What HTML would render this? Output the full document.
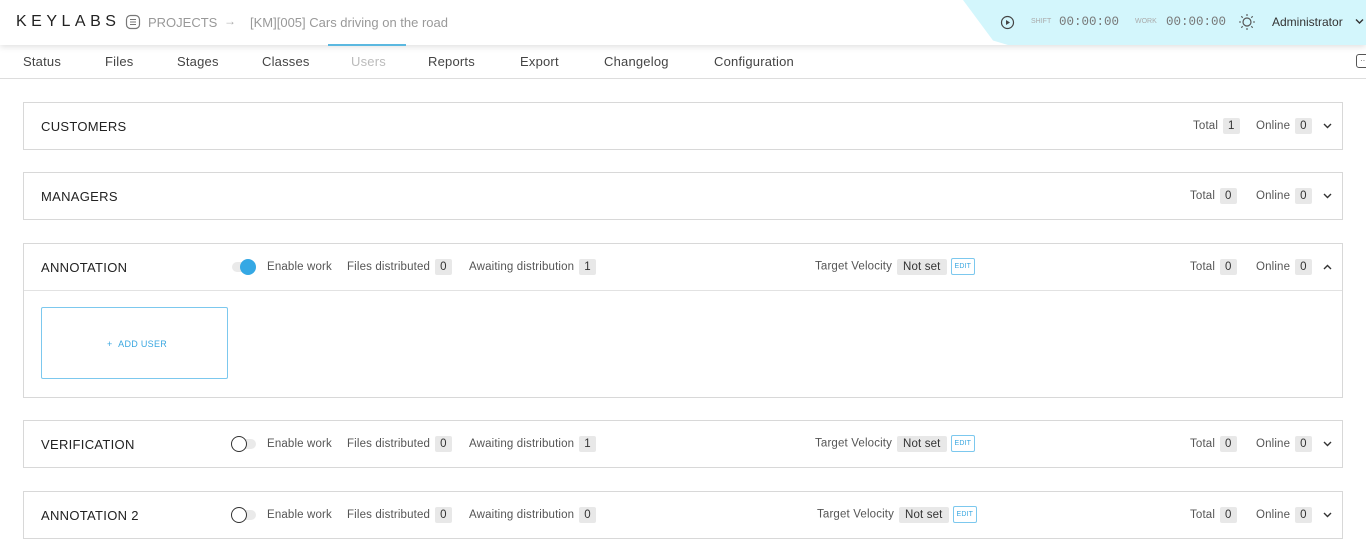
<!DOCTYPE html>
<html><head><style>
*{box-sizing:border-box;margin:0;padding:0}
body{width:1366px;height:541px;overflow:hidden;background:#fff;font-family:"Liberation Sans",sans-serif;color:#333;position:relative;font-size:12px}
.a{position:absolute;white-space:nowrap}
.hdr{position:absolute;left:0;top:0;width:1366px;height:45px;background:#fff;box-shadow:0 2px 6px rgba(0,0,0,.12);z-index:2}
.cy{position:absolute;left:963px;top:0;width:420px;height:45px;background:#d3f6fc;clip-path:polygon(0 0,100% 0,100% 100%,45px 100%,30px 90%)}
.tabs{position:absolute;top:45px;left:0;width:1366px;height:34px;border-bottom:1px solid #ddd}
.tab{position:absolute;top:54px;font-size:13px;color:#444;letter-spacing:.2px}
.panel{position:absolute;left:23px;width:1320px;border:1px solid #d8d8d8;background:#fff}
.t{font-size:13px;color:#222;letter-spacing:.3px}
.lb{font-size:11.5px;color:#555;letter-spacing:.15px}
.bd{display:inline-block;background:#e8e8e8;border-radius:2px;padding:2px 5px;font-size:11.5px;color:#333;margin-left:5px}
.edit{display:inline-block;border:1px solid #7cc8ee;border-radius:2px;font-size:7px;color:#3aa7e0;padding:4px 3px;margin-left:4px;vertical-align:middle}
.tog{position:absolute;width:24px;height:10px;border-radius:5px;background:#eaeaea}
.knob{position:absolute;top:-4px;width:16px;height:16px;border-radius:50%}
</style></head><body>
<div class="hdr">
<div class="cy"></div>
<div class="a" style="left:16px;top:13px;font-size:16px;letter-spacing:4.5px;color:#222">KEYLABS</div>
<svg class="a" style="left:125px;top:14px" width="16" height="16" viewBox="0 0 16 16"><rect x="1.5" y="1.5" width="13" height="13" rx="4" fill="none" stroke="#777" stroke-width="1.2"/><path d="M5 5.5h6M5 8h6M5 10.5h6" stroke="#777" stroke-width="1.1"/></svg>
<div class="a" style="left:148px;top:15px;font-size:13px;color:#999">PROJECTS</div>
<div class="a" style="left:224px;top:14px;font-size:12px;color:#aaa">→</div>
<div class="a" style="left:250px;top:15px;font-size:13px;color:#999">[KM][005] Cars driving on the road</div>
<svg class="a" style="left:1000px;top:15px" width="15" height="15" viewBox="0 0 15 15"><circle cx="7.5" cy="7.5" r="6" fill="none" stroke="#444" stroke-width="1.2"/><path d="M6 5v5l4-2.5z" fill="#444"/></svg>
<div class="a" style="left:1031px;top:18px;font-size:7px;color:#aaa">SHIFT</div>
<div class="a" style="left:1059px;top:15px;font-size:12.5px;color:#777;font-family:'Liberation Mono',monospace">00:00:00</div>
<div class="a" style="left:1135px;top:18px;font-size:7px;color:#aaa">WORK</div>
<div class="a" style="left:1166px;top:15px;font-size:12.5px;color:#777;font-family:'Liberation Mono',monospace">00:00:00</div>
<svg class="a" style="left:1238px;top:13px" width="18" height="18" viewBox="0 0 18 18"><circle cx="9" cy="9" r="4" fill="none" stroke="#555" stroke-width="1.2"/><path d="M9 1v2M9 15v2M1 9h2M15 9h2M3.3 3.3l1.4 1.4M13.3 13.3l1.4 1.4M3.3 14.7l1.4-1.4M13.3 4.7l1.4-1.4" stroke="#555" stroke-width="1.1"/></svg>
<div class="a" style="left:1272px;top:15px;font-size:12px;color:#333">Administrator</div>
<svg class="a" style="left:1355px;top:18px" width="9" height="7" viewBox="0 0 9 7"><path d="M1 1.5l3.5 3.5 3.5-3.5" fill="none" stroke="#333" stroke-width="1.4"/></svg>
</div>
<div class="tabs"></div>
<div class="a" style="left:328px;top:44px;width:78px;height:2px;background:#5bb8e0;z-index:3"></div>
<div class="tab" style="left:23px">Status</div>
<div class="tab" style="left:105px">Files</div>
<div class="tab" style="left:177px">Stages</div>
<div class="tab" style="left:262px">Classes</div>
<div class="tab" style="left:351px;color:#bbb">Users</div>
<div class="tab" style="left:428px">Reports</div>
<div class="tab" style="left:520px">Export</div>
<div class="tab" style="left:604px">Changelog</div>
<div class="tab" style="left:714px">Configuration</div>
<div class="a" style="left:1356px;top:54px;width:14px;height:14px;border:1.3px solid #555;border-radius:3px"></div>
<div class="a" style="left:1360px;top:56px;font-size:8px;color:#555">··</div>

<div class="panel" style="top:102px;height:48px"></div>
<div class="panel" style="top:172px;height:48px"></div>
<div class="panel" style="top:243px;height:155px"><div style="position:absolute;left:0;top:46px;width:100%;border-top:1px solid #e2e2e2"></div></div>
<div class="panel" style="top:420px;height:48px"></div>
<div class="panel" style="top:491px;height:48px"></div>

<div class="a t" style="left:41px;top:119px">CUSTOMERS</div>
<div class="a t" style="left:41px;top:189px">MANAGERS</div>
<div class="a t" style="left:41px;top:260px">ANNOTATION</div>
<div class="a t" style="left:41px;top:437px">VERIFICATION</div>
<div class="a t" style="left:41px;top:508px">ANNOTATION 2</div>

<div class="a lb" style="left:1193px;top:118px">Total<span class="bd">1</span></div>
<div class="a lb" style="left:1256px;top:118px">Online<span class="bd">0</span></div>
<div class="a lb" style="left:1190px;top:188px">Total<span class="bd">0</span></div>
<div class="a lb" style="left:1256px;top:188px">Online<span class="bd">0</span></div>
<div class="a lb" style="left:1190px;top:259px">Total<span class="bd">0</span></div>
<div class="a lb" style="left:1256px;top:259px">Online<span class="bd">0</span></div>
<div class="a lb" style="left:1190px;top:436px">Total<span class="bd">0</span></div>
<div class="a lb" style="left:1256px;top:436px">Online<span class="bd">0</span></div>
<div class="a lb" style="left:1190px;top:507px">Total<span class="bd">0</span></div>
<div class="a lb" style="left:1256px;top:507px">Online<span class="bd">0</span></div>
<svg class="a" style="left:1323px;top:123px" width="9" height="6"><path d="M1 1l3.5 3.5L8 1" fill="none" stroke="#333" stroke-width="1.4"/></svg>
<svg class="a" style="left:1323px;top:193px" width="9" height="6"><path d="M1 1l3.5 3.5L8 1" fill="none" stroke="#333" stroke-width="1.4"/></svg>
<svg class="a" style="left:1323px;top:264px" width="9" height="6"><path d="M1 5l3.5-3.5L8 5" fill="none" stroke="#333" stroke-width="1.4"/></svg>
<svg class="a" style="left:1323px;top:441px" width="9" height="6"><path d="M1 1l3.5 3.5L8 1" fill="none" stroke="#333" stroke-width="1.4"/></svg>
<svg class="a" style="left:1323px;top:512px" width="9" height="6"><path d="M1 1l3.5 3.5L8 1" fill="none" stroke="#333" stroke-width="1.4"/></svg>

<div class="tog" style="left:232px;top:262px"><div class="knob" style="left:8px;top:-3px;background:#35a8e4"></div></div>
<div class="tog" style="left:232px;top:439px"><div class="knob" style="left:-1px;top:-3px;background:#fff;border:1.3px solid #333"></div></div>
<div class="tog" style="left:232px;top:510px"><div class="knob" style="left:-1px;top:-3px;background:#fff;border:1.3px solid #333"></div></div>
<div class="a lb" style="left:267px;top:261px">Enable work</div>
<div class="a lb" style="left:267px;top:438px">Enable work</div>
<div class="a lb" style="left:267px;top:509px">Enable work</div>
<div class="a lb" style="left:347px;top:259px">Files distributed<span class="bd">0</span></div>
<div class="a lb" style="left:347px;top:436px">Files distributed<span class="bd">0</span></div>
<div class="a lb" style="left:347px;top:507px">Files distributed<span class="bd">0</span></div>
<div class="a lb" style="left:469px;top:259px">Awaiting distribution<span class="bd">1</span></div>
<div class="a lb" style="left:469px;top:436px">Awaiting distribution<span class="bd">1</span></div>
<div class="a lb" style="left:469px;top:507px">Awaiting distribution<span class="bd">0</span></div>
<div class="a lb" style="left:815px;top:258px">Target Velocity<span class="bd" style="padding:2px 6px">Not set</span><span class="edit">EDIT</span></div>
<div class="a lb" style="left:815px;top:435px">Target Velocity<span class="bd" style="padding:2px 6px">Not set</span><span class="edit">EDIT</span></div>
<div class="a lb" style="left:817px;top:506px">Target Velocity<span class="bd" style="padding:2px 6px">Not set</span><span class="edit">EDIT</span></div>

<div class="a" style="left:41px;top:307px;width:187px;height:72px;border:1px solid #7cc8ee;border-radius:2px"></div>
<div class="a" style="left:107px;top:339px;font-size:9px;color:#3aa7e0;letter-spacing:.3px">+&nbsp;&nbsp;ADD USER</div>
</body></html>
